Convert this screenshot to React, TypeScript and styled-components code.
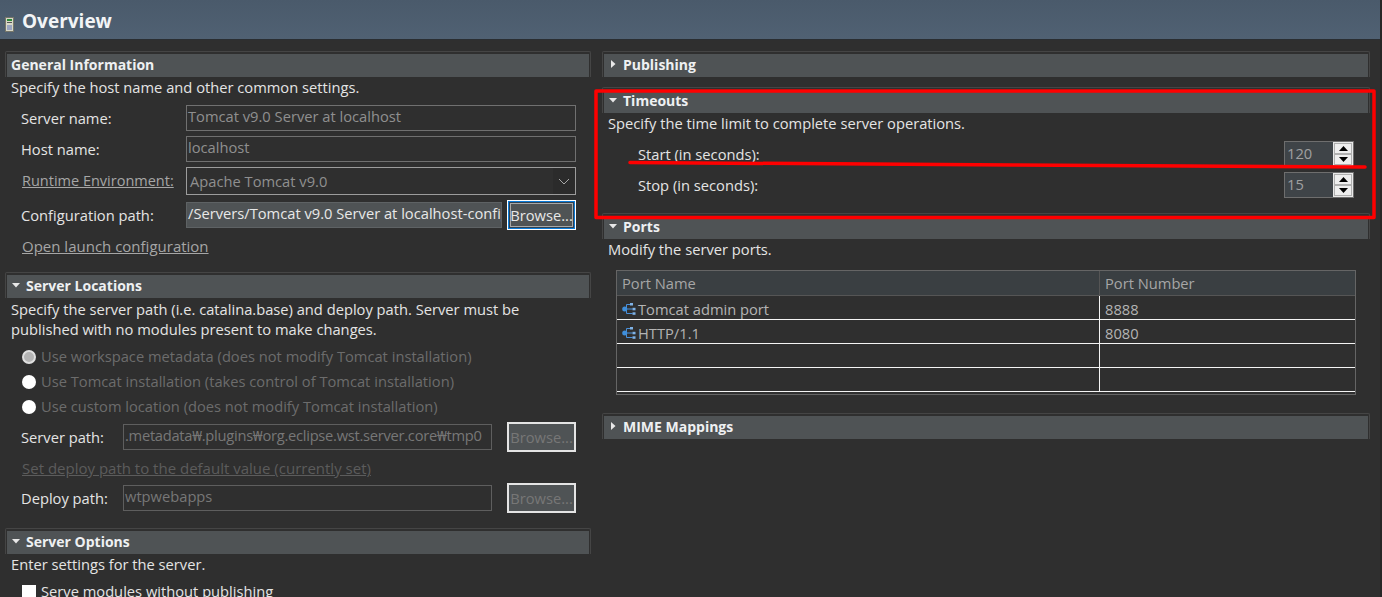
import React from "react";
import styled, { createGlobalStyle } from "styled-components";

const Global = createGlobalStyle`
  html, body { margin: 0; padding: 0; background: #2f2f2f; }
  body { font-family: "Open Sans", "Noto Sans", "Liberation Sans", sans-serif; font-size: 14.7px; color: #e4e4e4; }
`;

const Page = styled.div`
  position: relative;
  width: 1382px;
  height: 597px;
  overflow: hidden;
  background: #2f2f2f;
  box-sizing: border-box;
  border-right: 2px solid #272727;
`;

const Banner = styled.header`
  height: 40px;
  box-sizing: border-box;
  display: flex;
  align-items: center;
  gap: 8px;
  padding: 2px 0 0 5px;
  background: linear-gradient(#4a5a6b, #506173);
  border-bottom: 1px solid #2a2e32;
`;

const BannerTitle = styled.h1`
  margin: 0;
  font-size: 19px;
  font-weight: 700;
  line-height: 24px;
  color: #f2f4f6;
`;

const Columns = styled.main`
  display: flex;
  gap: 11px;
  padding: 11px 0 0 5px;
`;

const Column = styled.div<{ $w: number }>`
  width: ${(p) => p.$w}px;
  flex: none;
`;

const SectionHead = styled.div<{ $top?: number }>`
  margin-top: ${(p) => p.$top ?? 0}px;
  height: 26px;
  box-sizing: border-box;
  border: 1px solid #454545;
  border-width: 1px 1px 0 1px;
  border-radius: 2px 2px 0 0;
  padding: 2px 1px 0 1px;
  display: flex;
`;

const HeadFill = styled.div<{ $plain?: boolean }>`
  flex: 1;
  display: flex;
  align-items: center;
  gap: 5px;
  padding: 0 0 3px ${(p) => (p.$plain ? 4 : 5)}px;
  background: #4f5355;
  font-size: 14px;
  font-weight: 700;
  color: #eef0f2;
`;

const Twisty = styled.svg`
  width: 8px;
  height: 8px;
  flex: none;
  margin-right: 1px;
`;

const Desc = styled.p<{ $top?: number }>`
  margin: ${(p) => p.$top ?? 0}px 0 0 6px;
  padding-bottom: 2px;
  line-height: 18px;
  color: #e4e4e4;
`;

const Row = styled.div<{ $top: number; $h: number; $indent?: number }>`
  margin-top: ${(p) => p.$top}px;
  height: ${(p) => p.$h}px;
  display: flex;
  align-items: center;
  padding-left: ${(p) => p.$indent ?? 16}px;
`;

const Label = styled.span<{ $w: number }>`
  width: ${(p) => p.$w}px;
  flex: none;
  line-height: 20px;
  color: #e4e4e4;
`;

const LinkText = styled.span<{ $dim?: boolean; $w?: number }>`
  ${(p) => (p.$w ? `width: ${p.$w}px; flex: none;` : "")}
  font-size: ${(p) => (p.$w ? 14.5 : 15)}px;
  box-sizing: border-box;
  padding-left: 1px;
  text-decoration: underline;
  line-height: 20px;
  color: ${(p) => (p.$dim ? "#5c5c5c" : "#a6a6a6")};
`;

const Input = styled.div<{ $w: number; $kind?: "ro" | "fill" | "off"; $tight?: boolean }>`
  width: ${(p) => p.$w}px;
  height: 26px;
  flex: none;
  box-sizing: border-box;
  padding: 0 1px;
  overflow: hidden;
  white-space: nowrap;
  line-height: 21px;
  letter-spacing: ${(p) => (p.$tight ? "-0.27px" : "normal")};
  border: 1px solid ${(p) => (p.$kind === "off" ? "#5e5e5e" : p.$kind === "fill" ? "#5e6264" : "#707070")};
  background: ${(p) => (p.$kind === "fill" ? "#4f5355" : "transparent")};
  color: ${(p) => (p.$kind === "fill" ? "#e8e8e8" : p.$kind === "off" ? "#777" : "#8f8f8f")};
`;

const Combo = styled.div`
  width: 390px;
  height: 100%;
  flex: none;
  box-sizing: border-box;
  display: flex;
  align-items: center;
  justify-content: space-between;
  padding-left: 3px;
  border: 1px solid #9c9c9c;
  color: #8f8f8f;
`;

const ComboArrow = styled.span`
  width: 22px;
  height: 100%;
  display: flex;
  align-items: center;
  justify-content: center;
  background: #2b2b2b;
`;

const Browse = styled.div<{ $focus?: boolean; $off?: boolean }>`
  width: 69px;
  height: 30px;
  flex: none;
  box-sizing: border-box;
  display: flex;
  align-items: center;
  justify-content: center;
  background: #4f5355;
  color: ${(p) => (p.$off ? "#777" : "#e8e8e8")};
  ${(p) =>
    p.$focus
      ? `margin-left: 5px; border: 1px solid #fff; outline: 1px solid #0a7ad8; outline-offset: -2px; box-shadow: inset 0 0 0 2px #2f4050, inset 0 0 0 3px #a8a8a8;`
      : `margin-left: 15px; border: 2px solid #e4e4e4; padding-bottom: 1px;`}
`;

const RadioRow = styled.div<{ $top: number }>`
  margin-top: ${(p) => p.$top}px;
  height: 20px;
  box-sizing: border-box;
  display: flex;
  align-items: center;
  gap: 5px;
  padding: 0 0 2px 17px;
  color: #6c6c6c;
`;

const Radio = styled.span<{ $on?: boolean }>`
  width: 14px;
  height: 14px;
  margin-top: 2px;
  flex: none;
  border-radius: 50%;
  box-sizing: border-box;
  background: ${(p) => (p.$on ? "#b4b4b4" : "#fff")};
  border: ${(p) => (p.$on ? "2px solid #e0e0e0" : "0")};
`;

const CheckRow = styled(RadioRow)`
  color: #e4e4e4;
`;

const Check = styled.span`
  width: 14px;
  height: 14px;
  margin-top: 2px;
  flex: none;
  background: #fff;
`;

const Spinner = styled.div`
  margin-left: auto;
  margin-right: 16px;
  width: 70px;
  height: 26px;
  box-sizing: border-box;
  display: flex;
  border: 1px solid #6e6e6e;
  background: #3f4448;
  color: #a0a0a0;
`;

const SpinValue = styled.span`
  flex: 1;
  padding-left: 2px;
  line-height: 22px;
`;

const SpinButtons = styled.div`
  width: 20px;
  box-sizing: border-box;
  display: flex;
  flex-direction: column;
  gap: 2px;
  padding: 1px;
  border: 1px solid #e8e8e8;
  background: #b0b0b0;
`;

const SpinButton = styled.span`
  flex: 1;
  display: flex;
  align-items: center;
  justify-content: center;
  background: #eeeeee;
`;

const PortTable = styled.div`
  margin: 10px 0 0 14px;
  width: 740px;
  height: 125px;
  box-sizing: border-box;
  border: 1px solid #656565;
  display: grid;
  grid-template-columns: 483px 1fr;
  grid-template-rows: 25px repeat(4, 24px);
`;

const HeadCell = styled.div<{ $last?: boolean }>`
  background: #3a3f42;
  border-bottom: 1px solid #555;
  ${(p) => (p.$last ? "" : "border-right: 1px solid #555;")}
  padding-left: 5px;
  line-height: 25px;
  color: #a6a6a6;
`;

const Cell = styled.div<{ $last?: boolean }>`
  box-sizing: border-box;
  display: flex;
  align-items: center;
  gap: 2px;
  padding: 2px 0 0 5px;
  border-bottom: 1px solid #f4f4f4;
  ${(p) => (p.$last ? "" : "border-right: 1px solid #f4f4f4;")}
  color: #b4b4b4;
`;

const Annotation = styled.svg`
  position: absolute;
  left: 0;
  top: 0;
  width: 1382px;
  height: 597px;
  pointer-events: none;
`;

const Arrow = ({ open }: { open: boolean }) => (
  <Twisty viewBox="0 0 8 8">
    {open ? <path d="M0 2h8L4 6.500z" fill="#e8e8e8" /> : <path d="M2 0l4.500 4L2 8z" fill="#e8e8e8" />}
  </Twisty>
);

const Head = ({ title, open, top, plain }: { title: string; open?: boolean; top?: number; plain?: boolean }) => (
  <SectionHead $top={top}>
    <HeadFill $plain={plain}>
      {!plain && <Arrow open={!!open} />}
      {title}
    </HeadFill>
  </SectionHead>
);

const ServerIcon = () => (
  <svg width="9" height="15" viewBox="0 0 9 15" style={{ flex: "none", marginTop: 7 }}>
    <rect x="0.5" y="0.5" width="8" height="14" fill="#d8d8c8" stroke="#77776a" />
    <rect x="2" y="2" width="5" height="2" fill="#2c8a3a" />
    <rect x="2" y="5" width="5" height="1" fill="#555" />
    <rect x="2" y="8" width="5" height="5" fill="#9aa4c0" />
  </svg>
);

const PortIcon = () => (
  <svg width="14" height="14" viewBox="0 0 14 14" style={{ flex: "none" }}>
    <path d="M4.500 2.500h4M4.500 2.500v9h6M4.500 7h6" fill="none" stroke="#4a90d9" strokeWidth="1" />
    <circle cx="2.700" cy="7" r="2.500" fill="#3f8fdc" />
    <rect x="8" y="1" width="3" height="2.500" fill="#7fb2e6" />
    <rect x="10.500" y="5.800" width="3" height="2.500" fill="#7fb2e6" />
    <rect x="10.500" y="10.300" width="3" height="2.500" fill="#7fb2e6" />
  </svg>
);

const Tri = ({ up }: { up?: boolean }) => (
  <svg width="9" height="5" viewBox="0 0 9 5">
    <path d={up ? "M4.500 0L9 5H0z" : "M0 0h9L4.500 5z"} fill="#000" />
  </svg>
);

const Spin = ({ value }: { value: string }) => (
  <Spinner>
    <SpinValue>{value}</SpinValue>
    <SpinButtons>
      <SpinButton><Tri up /></SpinButton>
      <SpinButton><Tri /></SpinButton>
    </SpinButtons>
  </Spinner>
);

export default function App() {
  return (
    <Page>
      <Global />
      <Banner>
        <ServerIcon />
        <BannerTitle>Overview</BannerTitle>
      </Banner>
      <Columns>
        <Column $w={586}>
          <Head title="General Information" plain />
          <Desc $top={1}>Specify the host name and other common settings.</Desc>
          <Row $top={7} $h={26}>
            <Label $w={165}>Server name:</Label>
            <Input $w={390}>Tomcat v9.0 Server at localhost</Input>
          </Row>
          <Row $top={5} $h={26}>
            <Label $w={165}>Host name:</Label>
            <Input $w={390}>localhost</Input>
          </Row>
          <Row $top={5} $h={28}>
            <LinkText $w={165}>Runtime Environment:</LinkText>
            <Combo>
              Apache Tomcat v9.0
              <ComboArrow>
                <svg width="12" height="7" viewBox="0 0 12 7">
                  <path d="M1 1l5 5 5-5" fill="none" stroke="#a8a8a8" strokeWidth="1" />
                </svg>
              </ComboArrow>
            </Combo>
          </Row>
          <Row $top={5} $h={30}>
            <Label $w={165}>Configuration path:</Label>
            <Input $w={316} $kind="fill">/Servers/Tomcat v9.0 Server at localhost-config</Input>
            <Browse $focus>Browse...</Browse>
          </Row>
          <Row $top={6} $h={20}>
            <LinkText>Open launch configuration</LinkText>
          </Row>
          <Head title="Server Locations" open top={16} />
          <Desc $top={2}>Specify the server path (i.e. catalina.base) and deploy path. Server must be</Desc>
          <Desc>published with no modules present to make changes.</Desc>
          <RadioRow $top={7}><Radio $on />Use workspace metadata (does not modify Tomcat installation)</RadioRow>
          <RadioRow $top={5}><Radio />Use Tomcat installation (takes control of Tomcat installation)</RadioRow>
          <RadioRow $top={5}><Radio />Use custom location (does not modify Tomcat installation)</RadioRow>
          <Row $top={7} $h={26}>
            <Label $w={102}>Server path:</Label>
            <Input $w={369} $kind="off" $tight>.metadata₩.plugins₩org.eclipse.wst.server.core₩tmp0</Input>
            <Browse $off>Browse...</Browse>
          </Row>
          <Row $top={8} $h={20}>
            <LinkText $dim>Set deploy path to the default value (currently set)</LinkText>
          </Row>
          <Row $top={7} $h={26}>
            <Label $w={102}>Deploy path:</Label>
            <Input $w={369} $kind="off">wtpwebapps</Input>
            <Browse $off>Browse...</Browse>
          </Row>
          <Head title="Server Options" open top={17} />
          <Desc $top={1}>Enter settings for the server.</Desc>
          <CheckRow $top={7}><Check />Serve modules without publishing</CheckRow>
        </Column>
        <Column $w={768}>
          <Head title="Publishing" />
          <Head title="Timeouts" open top={10} />
          <Desc $top={1}>Specify the time limit to complete server operations.</Desc>
          <Row $top={7} $h={26} $indent={36}>
            <Label $w={200}>Start (in seconds):</Label>
            <Spin value="120" />
          </Row>
          <Row $top={5} $h={26} $indent={36}>
            <Label $w={200}>Stop (in seconds):</Label>
            <Spin value="15" />
          </Row>
          <Head title="Ports" open top={15} />
          <Desc $top={1}>Modify the server ports.</Desc>
          <PortTable>
            <HeadCell>Port Name</HeadCell>
            <HeadCell $last>Port Number</HeadCell>
            <Cell><PortIcon />Tomcat admin port</Cell>
            <Cell $last>8888</Cell>
            <Cell><PortIcon />HTTP/1.1</Cell>
            <Cell $last>8080</Cell>
            <Cell />
            <Cell $last />
            <Cell />
            <Cell $last />
          </PortTable>
          <Head title="MIME Mappings" top={18} />
        </Column>
      </Columns>
      <Annotation viewBox="0 0 1382 597">
        <path d="M596 91H1374V217.500H596Z" fill="none" stroke="#f00" strokeWidth="3.500" strokeLinejoin="round" />
        <path d="M630 162.500C900 164 1100 166 1365 167" fill="none" stroke="#f00" strokeWidth="3.500" strokeLinecap="round" />
      </Annotation>
    </Page>
  );
}
